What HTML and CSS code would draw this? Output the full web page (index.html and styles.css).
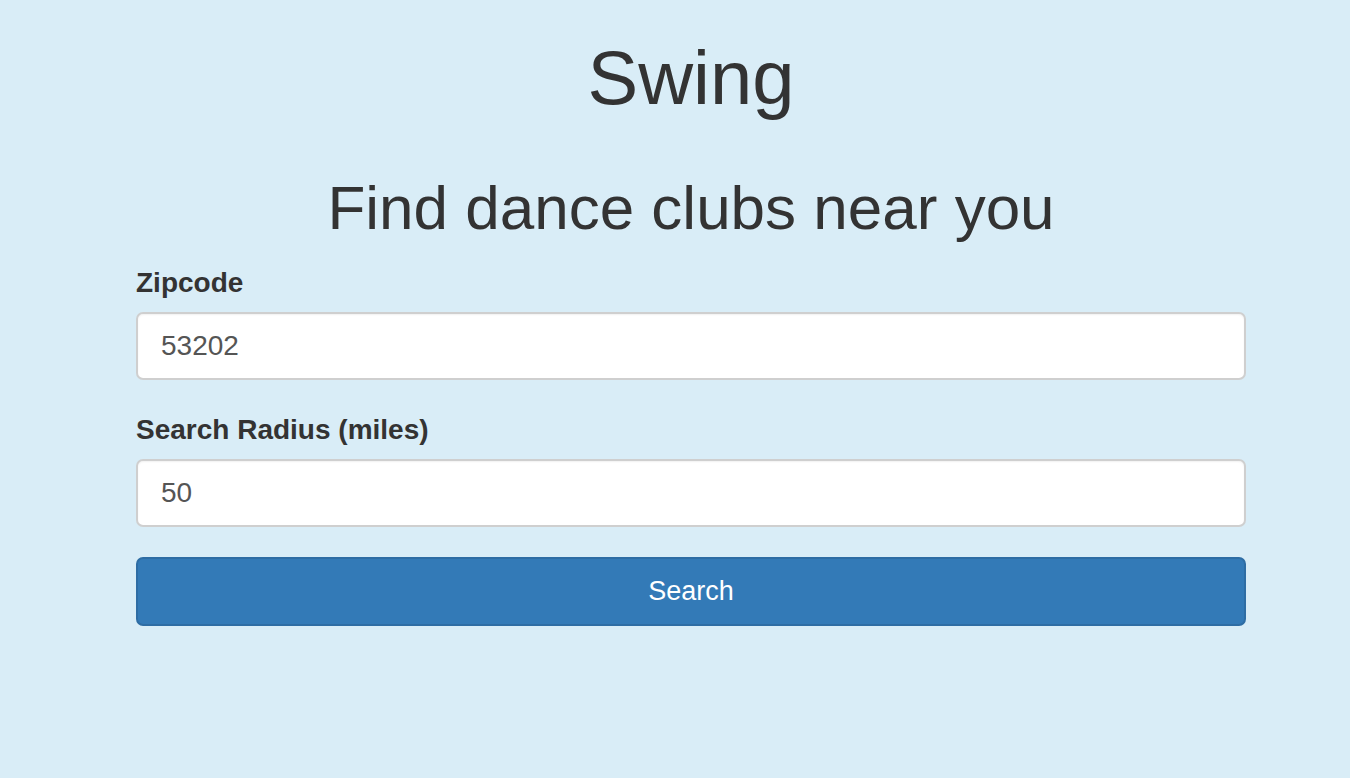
FILE: index.html
```html
<!DOCTYPE html>
<html lang="en">
<head>
<meta charset="utf-8">
<title>Swing</title>
<link rel="stylesheet" href="styles.css">
</head>
<body>
<div class="page">
  <h1 class="title">Swing</h1>
  <h2 class="subtitle">Find dance clubs near you</h2>
  <form class="search-form">
    <div class="form-group">
      <label class="label" for="zip">Zipcode</label>
      <input class="field" id="zip" type="text" value="53202">
    </div>
    <div class="form-group">
      <label class="label" for="radius">Search Radius (miles)</label>
      <input class="field" id="radius" type="text" value="50">
    </div>
    <button class="btn" type="button">Search</button>
  </form>
</div>
</body>
</html>
```
FILE: styles.css
```css
html, body {
  margin: 0;
  padding: 0;
  background: #d9edf7;
  height: 100%;
}
body {
  font-family: "Liberation Sans", Arial, sans-serif;
  color: #333;
}
.page {
  width: 1110px;
  margin-left: 136px;
  padding-top: 38px;
}
.title {
  margin: 0;
  font-size: 76px;
  line-height: 80px;
  font-weight: normal;
  text-align: center;
}
.subtitle {
  margin: 56px 0 0;
  font-size: 62px;
  line-height: 68px;
  font-weight: normal;
  text-align: center;
}
.search-form {
  display: flex;
  flex-direction: column;
  margin-top: 25px;
}
.form-group {
  display: flex;
  flex-direction: column;
  gap: 13px;
  margin-bottom: 34px;
}
.form-group + .form-group {
  margin-bottom: 30px;
}
.label {
  font-size: 28px;
  line-height: 32px;
  font-weight: bold;
  color: #333;
}
.field {
  box-sizing: border-box;
  width: 100%;
  height: 68px;
  margin: 0;
  padding: 0 23px;
  border: 2px solid #cfcfcf;
  border-radius: 7px;
  background: #fff;
  box-shadow: inset 0 1px 2px rgba(0,0,0,0.06);
  font-family: "Liberation Sans", Arial, sans-serif;
  font-size: 28px;
  color: #555;
  outline: none;
}
.btn {
  box-sizing: border-box;
  width: 100%;
  height: 69px;
  margin: 0;
  border: 2px solid #2e6da4;
  border-radius: 7px;
  background: #337ab7;
  color: #fff;
  font-family: "Liberation Sans", Arial, sans-serif;
  font-size: 27px;
  cursor: pointer;
}
```
